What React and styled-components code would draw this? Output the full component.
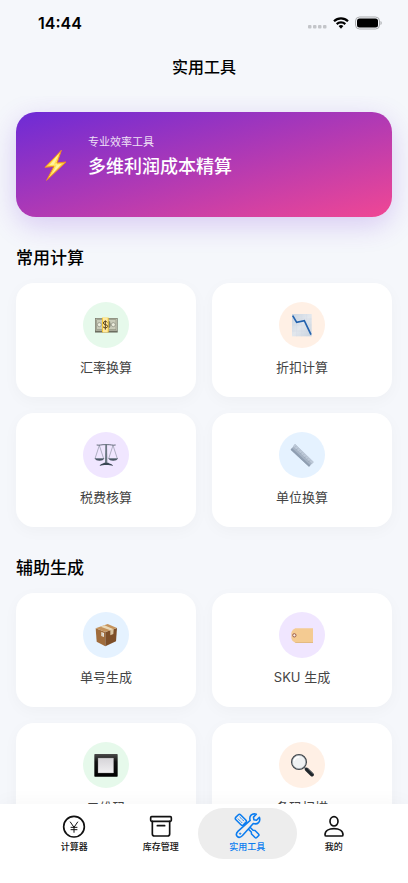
import React, { useState } from "react";
import styled, { createGlobalStyle } from "styled-components";

const GlobalStyle = createGlobalStyle`
  * {
    box-sizing: border-box;
  }

  body {
    margin: 0;
    background: #f5f7fb;
    color: #000;
    font-family: Inter, "Noto Sans CJK SC", sans-serif;
  }

  button {
    padding: 0;
    border: none;
    background: none;
    font-family: inherit;
    cursor: pointer;
  }
`;

const tints = {
  green: "#e6f9eb",
  orange: "#fff0e5",
  purple: "#f0e6ff",
  blue: "#e5f2ff",
};

const BoltIcon = () => (
  <svg width="32" height="32" viewBox="0 0 96 96" aria-hidden="true">
    <defs>
      <linearGradient id="bolt" x1="0" y1="0" x2="1" y2="1">
        <stop offset="0" stopColor="#ffb52e" />
        <stop offset="0.5" stopColor="#ffe65a" />
        <stop offset="1" stopColor="#f08a1c" />
      </linearGradient>
    </defs>
    <path
      d="M70 4 21 55l27-3-22 42 58-55-27 3z"
      fill="url(#bolt)"
      stroke="#f08c24"
      strokeWidth="3"
      strokeLinejoin="round"
    />
    <path d="M62 16 34 49l23-3-15 29 29-30-24 3z" fill="#fff3a0" />
  </svg>
);

const MoneyIcon = () => (
  <>
    <rect x="3" y="15" width="68" height="43" fill="#77786a" />
    <rect x="5" y="17" width="64" height="36" fill="#c9cbb9" />
    <rect x="8" y="20" width="58" height="30" fill="none" stroke="#8f917f" strokeWidth="2" />
    <circle cx="16" cy="35" r="6" fill="#eceddd" stroke="#85877a" strokeWidth="2" />
    <circle cx="58" cy="35" r="6" fill="#eceddd" stroke="#85877a" strokeWidth="2" />
    <ellipse cx="37" cy="35" rx="13" ry="14" fill="#7c7d6c" />
    <path d="M3 55h68M3 58h68" stroke="#5b5c50" strokeWidth="1" />
    <rect x="24" y="14" width="20" height="44" fill="#f7c935" />
    <rect x="27" y="14" width="14" height="44" fill="#ffe9a0" />
    <path
      d="M40 28c-2-4-12-4-12 2 0 7 13 3 13 10 0 6-12 6-14 1M34 22v28"
      fill="none"
      stroke="#5a4320"
      strokeWidth="3"
    />
  </>
);

const ChartIcon = () => (
  <>
    <defs>
      <linearGradient id="paper" x1="0" y1="0" x2="1" y2="1">
        <stop offset="0" stopColor="#c9d5e1" />
        <stop offset="0.5" stopColor="#e2e7ed" />
        <stop offset="1" stopColor="#c7d2de" />
      </linearGradient>
    </defs>
    <rect x="6" y="3" width="59" height="67" fill="url(#paper)" />
    <path
      d="M20 3v67M35 3v67M50 3v67M6 18h59M6 36h59M6 54h59"
      stroke="#d0d9e3"
      strokeWidth="1"
    />
    <path d="m8 8 12 20 23-5 20 42" fill="none" stroke="#2362ae" strokeWidth="5" />
  </>
);

const ScalesIcon = () => (
  <>
    <g fill="none" stroke="#6d7985" strokeWidth="1.5">
      <path d="M16 7 3 47M16 7l13 40M57 7 44 47M57 7l13 40" />
      <path d="M8 6c10 2 14-2 28-1 15-1 19 3 29 1" stroke="#4a5662" strokeWidth="2.5" />
    </g>
    <path d="M2 46h29c-3 10-26 10-29 0zM43 46h29c-3 10-26 10-29 0z" fill="#43505d" />
    <path d="M5 47h23M46 47h23" stroke="#9aa8b5" strokeWidth="1.5" />
    <path d="M34 3h5l1 57h-7z" fill="#6b7782" />
    <path d="M17 69c2-8 9-6 13-10h13c4 4 12 2 14 10-10-4-30-4-40 0z" fill="#394653" />
  </>
);

const RulerIcon = () => (
  <>
    <path d="M15 3 71 57 57 71 2 20z" fill="#a7b4c5" />
    <path d="M15 3 71 57l-5 5L9 10z" fill="#bdc9d8" />
    <path d="m2 20 4-5 55 52-4 4z" fill="#8f9eb1" />
    <path
      d="m18 10-3 3M24 16l-5 5M30 22l-3 3M36 28l-5 5M42 34l-3 3M48 40l-5 5M54 46l-3 3M60 52l-5 5"
      stroke="#8998aa"
      strokeWidth="1.5"
    />
  </>
);

const BoxIcon = () => (
  <>
    <path d="m5 16 29 11v43L8 56z" fill="#a06c3c" />
    <path d="m34 27 35-12-3 40-32 15z" fill="#7d4e28" />
    <path d="M5 16 41 3l28 12-35 12z" fill="#c5935c" />
    <path d="m20 11 11-4 28 12-10 3z" fill="#ead9b8" />
    <path d="m49 22 10-3-1 14-9 4z" fill="#d8c3a0" />
    <path d="m22 27 8 3v12l-8-3z" fill="#eee9df" />
    <path d="m24 32 4 2M24 36l4 2" stroke="#8b7a64" strokeWidth="1" />
  </>
);

const TagIcon = () => (
  <>
    <path d="M16 16h53v43H16C9 56 4 50 4 44V31c0-6 5-12 12-15z" fill="#f4cb92" />
    <path d="M16 57h53v2H16z" fill="#dcae6d" />
    <circle cx="13" cy="37" r="5" fill="#f8eee3" stroke="#9a5b4a" strokeWidth="3" />
  </>
);

const SquareIcon = () => (
  <>
    <defs>
      <linearGradient id="frame" x1="0" y1="0" x2="0" y2="1">
        <stop offset="0" stopColor="#4a4a4a" />
        <stop offset="0.35" stopColor="#111" />
        <stop offset="1" stopColor="#000" />
      </linearGradient>
      <linearGradient id="face" x1="0" y1="0" x2="0" y2="1">
        <stop offset="0" stopColor="#d6d4d8" />
        <stop offset="1" stopColor="#f0eff1" />
      </linearGradient>
    </defs>
    <rect x="1" y="3" width="70" height="68" rx="2" fill="url(#frame)" />
    <rect x="12" y="15" width="47" height="45" fill="url(#face)" stroke="#777" strokeWidth="1" />
  </>
);

const MagnifierIcon = () => (
  <>
    <path d="m43 43 8 8" stroke="#8d9399" strokeWidth="5" />
    <path d="m50 49 16 16" stroke="#20262b" strokeWidth="11" strokeLinecap="round" />
    <path d="m53 47 15 15" stroke="#5c666e" strokeWidth="2" strokeLinecap="round" />
    <circle cx="27" cy="27" r="22" fill="#f0f2f3" stroke="#3f454a" strokeWidth="4" />
    <circle cx="27" cy="27" r="20" fill="none" stroke="#a5abb0" strokeWidth="2" />
    <path d="M12 24c2-8 8-12 16-12" fill="none" stroke="#fff" strokeWidth="4" />
  </>
);

const CalculatorIcon = () => (
  <>
    <circle cx="42" cy="41" r="31" strokeWidth="5" />
    <path d="m31 27 11 16 11-16M42 43v15M33 43h18M33 50h18" strokeWidth="3" />
  </>
);

const StockIcon = () => (
  <>
    <rect x="11" y="11" width="62" height="14" rx="3" />
    <path d="M16 25v38c0 4 2 6 6 6h40c4 0 6-2 6-6V25M31 38h22" />
  </>
);

const ToolsIcon = () => (
  <g transform="translate(43 40) scale(0.93)" strokeWidth="5">
    <g transform="rotate(-45)">
      <path d="M-4-12h8v34l4 5v16q0 4-4 4h-8q-4 0-4-4V27l4-5z" />
      <rect x="-11" y="-47" width="22" height="35" rx="6" />
      <path d="M-4-38v17M4-38v17" strokeWidth="3" strokeDasharray="3 4" />
    </g>
    <g transform="rotate(45)">
      <path
        d="M-7-48v13l7 5 7-5v-13c6 3 10 8 10 14 0 7-4 11-10 14l3 52c0 9-4 14-10 14s-10-5-10-14l3-52c-6-3-10-7-10-14 0-6 4-11 10-14z"
        fill="#eee"
      />
      <circle cx="0" cy="33" r="2" strokeWidth="3" />
    </g>
  </g>
);

const UserIcon = () => (
  <>
    <ellipse cx="42" cy="25" rx="12" ry="14" />
    <path d="M15 65c0-12 12-18 27-18s27 6 27 18c0 2-1 4-4 4H19c-3 0-4-2-4-4z" />
  </>
);

const groups = [
  {
    title: "常用计算",
    tools: [
      { name: "汇率换算", tint: "green", Icon: MoneyIcon },
      { name: "折扣计算", tint: "orange", Icon: ChartIcon },
      { name: "税费核算", tint: "purple", Icon: ScalesIcon },
      { name: "单位换算", tint: "blue", Icon: RulerIcon },
    ],
  },
  {
    title: "辅助生成",
    tools: [
      { name: "单号生成", tint: "blue", Icon: BoxIcon },
      { name: "SKU 生成", tint: "purple", Icon: TagIcon },
      { name: "二维码", tint: "green", Icon: SquareIcon },
      { name: "条码扫描", tint: "orange", Icon: MagnifierIcon },
    ],
  },
];

const tabs = [
  { name: "计算器", Icon: CalculatorIcon },
  { name: "库存管理", Icon: StockIcon },
  { name: "实用工具", Icon: ToolsIcon },
  { name: "我的", Icon: UserIcon },
];

function StatusBar() {
  return (
    <StatusWrapper>
      <Clock>14:44</Clock>
      <StatusIcons>
        <svg width="20" height="14" viewBox="0 0 20 14" fill="#c3c5c9" aria-hidden="true">
          <rect x="1" y="9" width="3.5" height="3.5" rx="1" />
          <rect x="6" y="9" width="3.5" height="3.5" rx="1" />
          <rect x="11" y="9" width="3.5" height="3.5" rx="1" />
          <rect x="16" y="9" width="3.5" height="3.5" rx="1" />
        </svg>
        <svg width="16" height="14" viewBox="0 0 16 14" aria-hidden="true">
          <g fill="none" stroke="#000" strokeWidth="2.2">
            <path d="M1 5.3a10 10 0 0 1 14 0" />
            <path d="M3.7 8.1a6.2 6.2 0 0 1 8.6 0" />
          </g>
          <path d="M5.6 10a3.6 3.6 0 0 1 4.8 0L8 12.7z" />
        </svg>
        <svg width="27" height="14" viewBox="0 0 27 14" aria-hidden="true">
          <rect x="0.5" y="1" width="24" height="12" rx="4" fill="none" stroke="#a9abad" />
          <rect x="2" y="2.5" width="21" height="9" rx="2.5" />
          <path d="M25.5 5c1.6.6 1.6 3.4 0 4z" fill="#a9abad" />
        </svg>
      </StatusIcons>
    </StatusWrapper>
  );
}

function App() {
  const [activeTab, setActiveTab] = useState("实用工具");

  return (
    <Screen>
      <GlobalStyle />
      <StatusBar />
      <Header>
        <PageTitle>实用工具</PageTitle>
      </Header>
      <Content>
        <Hero type="button">
          <BoltIcon />
          <HeroText>
            <HeroHint>专业效率工具</HeroHint>
            <HeroTitle>多维利润成本精算</HeroTitle>
          </HeroText>
        </Hero>
        {groups.map((group) => (
          <section key={group.title}>
            <SectionTitle>{group.title}</SectionTitle>
            <ToolGrid>
              {group.tools.map(({ name, tint, Icon }) => (
                <ToolCard key={name} type="button">
                  <IconCircle $tint={tints[tint]}>
                    <svg width="24" height="24" viewBox="0 0 72 72" aria-hidden="true">
                      <Icon />
                    </svg>
                  </IconCircle>
                  <ToolName>{name}</ToolName>
                </ToolCard>
              ))}
            </ToolGrid>
          </section>
        ))}
      </Content>
      <TabBar>
        {tabs.map(({ name, Icon }) => (
          <Tab
            key={name}
            type="button"
            $active={activeTab === name}
            onClick={() => setActiveTab(name)}
          >
            <TabIcon viewBox="0 0 84 84" aria-hidden="true">
              <Icon />
            </TabIcon>
            <TabName>{name}</TabName>
          </Tab>
        ))}
      </TabBar>
    </Screen>
  );
}

const Screen = styled.div`
  display: flex;
  flex-direction: column;
  height: 100vh;
`;

const StatusWrapper = styled.div`
  display: flex;
  flex: none;
  align-items: center;
  justify-content: space-between;
  height: 46px;
  padding: 0 26px 0 38px;
`;

const Clock = styled.span`
  font-size: 16px;
  font-weight: 600;
  line-height: 20px;
`;

const StatusIcons = styled.div`
  display: flex;
  align-items: center;
  gap: 6px;
`;

const Header = styled.header`
  display: flex;
  flex: none;
  justify-content: center;
  padding: 9px 16px 17px;
`;

const PageTitle = styled.h1`
  margin: 0;
  font-size: 16px;
  font-weight: 500;
  line-height: 24px;
`;

const Content = styled.main`
  flex: 1;
  min-height: 0;
  padding: 16px;
  overflow-y: auto;
  scrollbar-width: none;
`;

const Hero = styled.button`
  display: flex;
  align-items: center;
  gap: 18px;
  width: 100%;
  min-height: 105px;
  padding: 22px;
  border-radius: 20px;
  background: linear-gradient(to bottom right, #6d2bd6, #f04794);
  box-shadow: 0 8px 28px rgba(109, 40, 217, 0.22);
  color: #fff;
  text-align: left;
`;

const HeroText = styled.span`
  display: flex;
  flex-direction: column;
  align-self: flex-start;
  gap: 4px;
`;

const HeroHint = styled.span`
  font-size: 11px;
  line-height: 16px;
  opacity: 0.85;
`;

const HeroTitle = styled.span`
  font-size: 18px;
  font-weight: 500;
  line-height: 26px;
`;

const SectionTitle = styled.h2`
  margin: 29px 0 13px;
  font-size: 17px;
  font-weight: 500;
  line-height: 24px;
`;

const ToolGrid = styled.div`
  display: grid;
  grid-template-columns: 1fr 1fr;
  gap: 16px;
`;

const ToolCard = styled.button`
  display: flex;
  flex-direction: column;
  align-items: center;
  gap: 10px;
  padding: 19px 12px 20px;
  border-radius: 18px;
  background: #fff;
  box-shadow: 0 4px 16px rgba(0, 0, 0, 0.03);
`;

const IconCircle = styled.span`
  display: flex;
  align-items: center;
  justify-content: center;
  width: 46px;
  height: 46px;
  border-radius: 50%;
  background: ${(props) => props.$tint};
`;

const ToolName = styled.span`
  color: #444;
  font-size: 13px;
  line-height: 19px;
`;

const TabBar = styled.nav`
  display: flex;
  flex: none;
  height: 79px;
  padding: 4px 31px 24px;
  background: #fff;
  box-shadow: 0 0 20px rgba(0, 0, 0, 0.04);
  z-index: 1;
`;

const Tab = styled.button`
  position: relative;
  display: flex;
  flex: 1;
  flex-direction: column;
  align-items: center;
  padding-top: 5px;
  color: ${(props) => (props.$active ? "#0a7cf0" : "#111")};

  /* the pill is a little wider than the tab itself */
  &::before {
    content: "";
    position: absolute;
    inset: 0 -6px;
    border-radius: 26px;
    background: ${(props) => (props.$active ? "#ededed" : "none")};
  }
`;

const TabIcon = styled.svg`
  position: relative;
  width: 28px;
  height: 28px;
  fill: none;
  stroke: currentColor;
  stroke-width: 5;
  stroke-linecap: round;
  stroke-linejoin: round;
`;

const TabName = styled.span`
  position: relative;
  font-size: 9px;
  font-weight: 500;
  line-height: 12px;
`;

export default App;
